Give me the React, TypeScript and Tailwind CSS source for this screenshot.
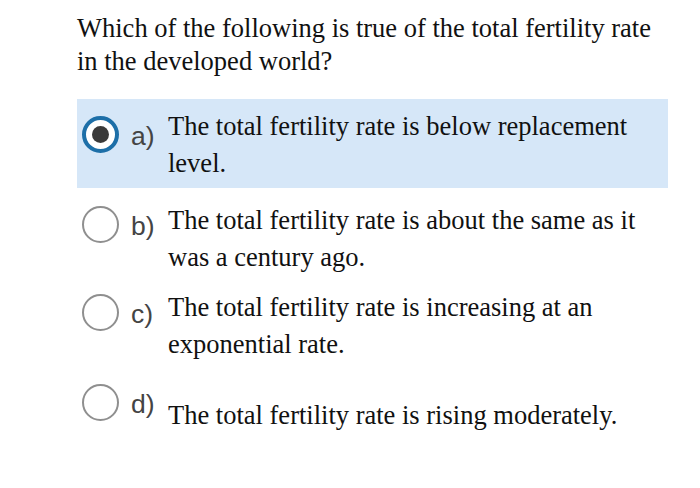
import React from "react";

const serif = { fontFamily: '"Liberation Serif", "Times New Roman", serif' };
const sans = { fontFamily: '"Liberation Sans", Arial, sans-serif' };

function Radio({ selected }: { selected?: boolean }) {
  if (selected) {
    return (
      <div className="w-[37px] h-[37px] rounded-full border-[4px] border-[#1d6fa8] bg-white flex items-center justify-center shrink-0">
        <div className="w-[17px] h-[17px] rounded-full bg-[#3a3a3a]" />
      </div>
    );
  }
  return <div className="w-[37px] h-[37px] rounded-full border-[2px] border-[#8f8f8f] bg-white shrink-0" />;
}

function Option({
  letter,
  lines,
  selected,
  className,
  textClass,
}: {
  letter: string;
  lines: string[];
  selected?: boolean;
  className?: string;
  textClass?: string;
}) {
  return (
    <div className={`flex items-start ${className ?? ""}`}>
      <div className="w-[91px] flex items-center pl-[5px] gap-[12px] shrink-0">
        <Radio selected={selected} />
        <span className="text-[26.5px] leading-[30px] mt-[3px] text-[#444]" style={sans}>
          {letter}
        </span>
      </div>
      <div className={`text-[26.5px] leading-[37px] text-[#111] ${textClass ?? ""}`} style={serif}>
        {lines.map((l, i) => (
          <div key={i}>{l}</div>
        ))}
      </div>
    </div>
  );
}

export default function App() {
  return (
    <div className="w-[700px] h-[488px] bg-white relative overflow-hidden">
      <div className="pl-[77px] pt-[12px] h-[99px] text-[26.5px] leading-[33px] text-[#111]" style={serif}>
        <div>Which of the following is true of the total fertility rate</div>
        <div>in the developed world?</div>
      </div>
      <div className="ml-[77px] w-[591px]">
        <Option
          selected
          letter="a)"
          lines={["The total fertility rate is below replacement", "level."]}
          className="bg-[#d6e7f8] h-[89px] pt-[17px]"
          textClass="-mt-[8px]"
        />
        <Option
          letter="b)"
          lines={["The total fertility rate is about the same as it", "was a century ago."]}
          className="h-[89px] pt-[18px]"
          textClass="-mt-[4px]"
        />
        <Option
          letter="c)"
          lines={["The total fertility rate is increasing at an", "exponential rate."]}
          className="h-[90px] pt-[17px]"
          textClass="-mt-[5px]"
        />
        <Option
          letter="d)"
          lines={["The total fertility rate is rising moderately."]}
          className="pt-[17px]"
          textClass="mt-[13px]"
        />
      </div>
    </div>
  );
}
